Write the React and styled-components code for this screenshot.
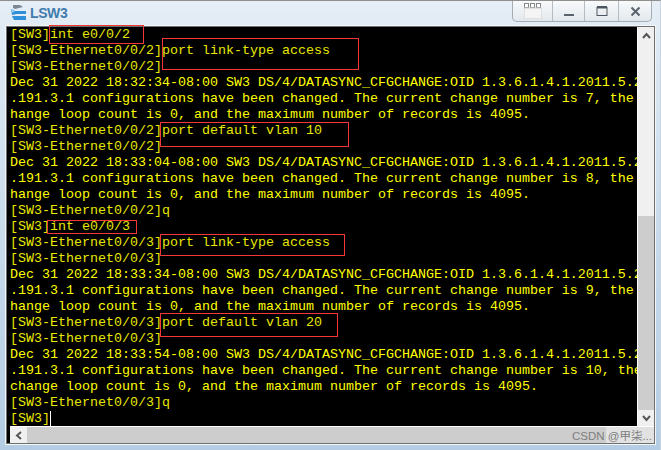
import React from "react";
import styled, { createGlobalStyle } from "styled-components";

const Global = createGlobalStyle`
  html, body { margin: 0; padding: 0; background: #dfe9f3; }
`;

const Frame = styled.div`
  position: relative;
  box-sizing: border-box;
  width: 661px;
  height: 450px;
  padding: 0 5px 6px 6px;
  display: flex;
  flex-direction: column;
  overflow: hidden;
  background: linear-gradient(180deg, #e6eef6 0%, #dce8f3 12%, #c4d8ea 60%, #b4cde4 100%);
  border-top: 1px solid #8f8f8f;
  border-right: 1px solid #c8d4df;
`;

const TitleBar = styled.div`
  flex: none;
  height: 25px;
  display: flex;
  align-items: flex-start;
  justify-content: space-between;
`;

const Brand = styled.div`
  display: flex;
  align-items: center;
  gap: 3px;
  padding: 3px 0 0 4px;
  color: #3f7cad;
  font: bold 14px "Liberation Sans", Arial, sans-serif;
  letter-spacing: -0.4px;
`;

const WindowButtons = styled.div`
  display: flex;
  margin-right: 3px;
  height: 20px;
  border: 1px solid #a5adb5;
  border-top: none;
  border-radius: 0 0 5px 5px;
  background: linear-gradient(180deg, #f8fafb, #e2e8ed);
`;

const WinButton = styled.div`
  box-sizing: border-box;
  width: ${(p) => p.$w}px;
  display: flex;
  align-items: center;
  justify-content: center;
  border-left: ${(p) => (p.$first ? "none" : "1px solid #b4bcc4")};
`;

const Body = styled.div`
  flex: none;
  width: 647px;
  display: grid;
  grid-template-columns: 630px 17px;
  grid-template-rows: 399px 17px;
  border: 1px solid #6f6f6f;
  background: #fff;
  box-shadow: 0 0 0 1px #f4f7fa;
`;

const Screen = styled.div`
  position: relative;
`;

const Terminal = styled.div`
  height: 100%;
  background: #000;
  overflow: hidden;
  padding-left: 3px;
  font: 13.33px/16px "Liberation Mono", "Courier New", monospace;
  white-space: pre;
`;

const Line = styled.div`
  height: 16px;
  color: ${(p) => (p.$log ? "#ffff00" : "#e8e800")};
`;

const Caret = styled.span`
  display: inline-block;
  width: 1px;
  height: 15px;
  background: #fff;
  vertical-align: top;
`;

const Mark = styled.div`
  position: absolute;
  box-sizing: border-box;
  border: 1px solid #f43838;
`;

const VScroll = styled.div`
  display: flex;
  flex-direction: column;
  background: #f0f0f0;
  border-left: 1px solid #fff;
`;

const HScroll = styled.div`
  grid-column: 1 / -1;
  display: flex;
  background: #e2e2e2;
  border-top: 1px solid #fff;
`;

const Stub = styled.div`
  flex: none;
  width: 3px;
  margin-top: -1px;
  background: #000;
`;

const Arrow = styled.div`
  flex: none;
  width: ${(p) => p.$w || 16}px;
  height: 16px;
  display: flex;
  align-items: center;
  justify-content: center;
  background: #f0f0f0;
`;

const VThumb = styled.div`
  flex: 1;
  margin-top: 173px;
  background: #cdcdcd;
`;

const HThumb = styled.div`
  flex: none;
  width: 579px;
  background: #cdcdcd;
`;

const Watermark = styled.div`
  position: absolute;
  right: 8px;
  bottom: 7px;
  color: #7e7e7e;
  font: 11.5px "Liberation Sans", "Noto Sans CJK SC", sans-serif;
`;

const logLines = (time, n) => [
  `Dec 31 2022 ${time}-08:00 SW3 DS/4/DATASYNC_CFGCHANGE:OID 1.3.6.1.4.1.2011.5.25`,
  `.191.3.1 configurations have been changed. The current change number is ${n}, the c`,
  "hange loop count is 0, and the maximum number of records is 4095.",
];

const rows = [
  ["[SW3]int e0/0/2"],
  ["[SW3-Ethernet0/0/2]port link-type access"],
  ["[SW3-Ethernet0/0/2]"],
  logLines("18:32:34", 7),
  ["[SW3-Ethernet0/0/2]port default vlan 10"],
  ["[SW3-Ethernet0/0/2]"],
  logLines("18:33:04", 8),
  ["[SW3-Ethernet0/0/2]q"],
  ["[SW3]int e0/0/3"],
  ["[SW3-Ethernet0/0/3]port link-type access"],
  ["[SW3-Ethernet0/0/3]"],
  logLines("18:33:34", 9),
  ["[SW3-Ethernet0/0/3]port default vlan 20"],
  ["[SW3-Ethernet0/0/3]"],
  [
    "Dec 31 2022 18:33:54-08:00 SW3 DS/4/DATASYNC_CFGCHANGE:OID 1.3.6.1.4.1.2011.5.25",
    ".191.3.1 configurations have been changed. The current change number is 10, the",
    "change loop count is 0, and the maximum number of records is 4095.",
  ],
  ["[SW3-Ethernet0/0/3]q"],
];

// red annotation boxes, relative to the terminal's corner at (7, 27)
const marks = [
  { left: 42, top: -2, width: 95, height: 19 },
  { left: 155, top: 11, width: 197, height: 32 },
  { left: 153, top: 95, width: 189, height: 25 },
  { left: 40, top: 193, width: 90, height: 14 },
  { left: 153, top: 207, width: 185, height: 22 },
  { left: 153, top: 286, width: 178, height: 24 },
];

const Chevron = ({ d }) => (
  <svg width="9" height="7" viewBox="0 0 9 7">
    <path d={d} fill="none" stroke="#555" strokeWidth="2" />
  </svg>
);

export default function App() {
  return (
    <Frame>
      <Global />
      <TitleBar>
        <Brand>
          <svg width="17" height="18" viewBox="0 0 17 18">
            <path d="M3 1h7l3 2-8 2-2-1z" fill="#7d8a95" />
            <path d="M1 5l4 2h11v3H7l-5 1z" fill="#2f8fd8" />
            <path d="M2 12h14v4H4z" fill="#2f8fd8" />
            <path d="M1 5l4 2-3 2z" fill="#8fc8ee" />
          </svg>
          LSW3
        </Brand>
        <WindowButtons>
          <WinButton $first $w={39}>
            <svg width="18" height="16" viewBox="0 0 18 16">
              <rect x="0.5" y="0.5" width="4" height="4" fill="#fff" stroke="#888" />
              <rect x="6.5" y="0.5" width="4" height="4" fill="#fff" stroke="#888" />
              <rect x="12.5" y="0.5" width="4" height="4" fill="#fff" stroke="#888" />
              <rect x="0" y="5" width="18" height="11" fill="#f4f4f4" stroke="#ccc" />
            </svg>
          </WinButton>
          <WinButton $w={32}>
            <svg width="12" height="12" viewBox="0 0 12 12">
              <rect x="1" y="9" width="10" height="2" fill="#59636d" />
            </svg>
          </WinButton>
          <WinButton $w={34}>
            <svg width="12" height="12" viewBox="0 0 12 12">
              <rect x="1" y="2.5" width="10" height="8" fill="none" stroke="#4c5660" />
              <rect x="1" y="1" width="10" height="2.5" fill="#4c5660" />
            </svg>
          </WinButton>
          <WinButton $w={33}>
            <svg width="11" height="11" viewBox="0 0 11 11">
              <path d="M1.5 1.5l8 8M9.5 1.5l-8 8" stroke="#59636d" strokeWidth="2" />
            </svg>
          </WinButton>
        </WindowButtons>
      </TitleBar>
      <Body>
        <Screen>
          <Terminal>
            {rows.flat().map((text, i) => (
              <Line key={i} $log={!text.startsWith("[")}>
                {text}
              </Line>
            ))}
            <Line>
              [SW3]
              <Caret />
            </Line>
          </Terminal>
          {marks.map((m, i) => (
            <Mark key={i} style={m} />
          ))}
        </Screen>
        <VScroll>
          <Arrow>
            <Chevron d="M1 6l3.5-4L8 6" />
          </Arrow>
          <VThumb />
          <Arrow>
            <Chevron d="M1 1l3.5 4L8 1" />
          </Arrow>
        </VScroll>
        <HScroll>
          <Stub />
          <Arrow $w={17}>
            <svg width="7" height="9" viewBox="0 0 7 9">
              <path d="M6 1L2 4.5 6 8" fill="none" stroke="#555" strokeWidth="2" />
            </svg>
          </Arrow>
          <HThumb />
        </HScroll>
      </Body>
      <Watermark>CSDN @甲柒...</Watermark>
    </Frame>
  );
}
